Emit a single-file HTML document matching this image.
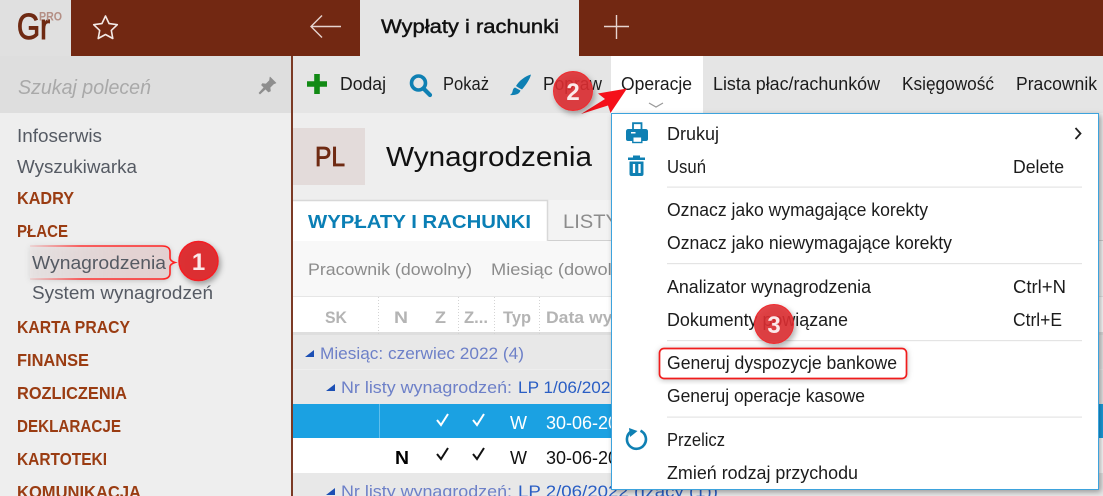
<!DOCTYPE html>
<html lang="pl"><head><meta charset="utf-8"><title>Wypłaty i rachunki</title>
<style>
html,body{margin:0;padding:0;width:1103px;height:496px;overflow:hidden;background:#eee}
svg{display:block;position:absolute;left:0;top:0}
text{font-family:"Liberation Sans",sans-serif;font-size:18px;fill:#202020}
.s{fill:#555a63}
.h{fill:#9a3c12;font-weight:bold;font-size:17.6px}
.m{fill:#1c1c1c}
.g{fill:#8c8c8c}
.c{fill:#b4b4b4;font-weight:bold}
.b1{fill:#6d80c8;font-size:17px}
.b2{fill:#2a5ec4;font-size:17px}
.d{fill:#fff}
.n{fill:#fbeaea;font-size:24px;font-weight:bold}
</style></head><body>
<svg width="1103" height="496" viewBox="0 0 1103 496" xmlns="http://www.w3.org/2000/svg">
<defs>
<linearGradient id="fa" x1="0" x2="1" y1="0" y2="0"><stop offset="0" stop-color="#e9dede" stop-opacity=".4"/><stop offset=".6" stop-color="#e3d3d3"/><stop offset="1" stop-color="#e3d0d0"/></linearGradient>
<linearGradient id="fb" x1="0" x2="1" y1="0" y2="0"><stop offset="0" stop-color="#f44" stop-opacity=".15"/><stop offset=".35" stop-color="#f33"/><stop offset="1" stop-color="#f22"/></linearGradient>
<filter id="sh" x="-30%" y="-30%" width="170%" height="170%"><feDropShadow dx="2" dy="3" stdDeviation="3" flood-color="#000" flood-opacity=".35"/></filter>
<filter id="shm" x="-3%" y="-3%" width="106%" height="106%"><feDropShadow dx="2" dy="2" stdDeviation="3" flood-color="#000" flood-opacity=".35"/></filter>
<filter id="shb" x="-5%" y="-20%" width="110%" height="140%"><feDropShadow dx="0" dy="1" stdDeviation="3" flood-color="#000" flood-opacity=".25"/></filter>
</defs>

<!-- base -->
<rect width="1103" height="496" fill="#eee"/>
<rect x="0" y="0" width="71" height="56" fill="#e0e0e0"/>
<rect x="71" y="0" width="1032" height="56" fill="#722812"/>
<rect x="360" y="0" width="219" height="56" fill="#e5e5e5"/>
<rect x="0" y="56" width="291" height="57" fill="#dedede"/>
<rect x="293" y="56" width="810" height="57" fill="#e5e5e5"/>
<rect x="611" y="56" width="92" height="58" fill="#fff"/>
<rect x="291" y="56" width="2" height="440" fill="#7b3a25"/>

<!-- top bar -->
<text x="17" y="39" textLength="33" lengthAdjust="spacingAndGlyphs" style="font-size:36px;fill:#6f2a13;stroke:#6f2a13;stroke-width:1.1px">Gr</text>
<text x="39" y="20.500" textLength="23" lengthAdjust="spacingAndGlyphs" style="font-size:11.500px;fill:#b48f85;font-weight:bold">PRO</text>
<path d="M105.500 16l3.600 7.600 8.200 1.100-6 5.700 1.500 8.100-7.300-4-7.300 4 1.500-8.100-6-5.700 8.200-1.100z" fill="none" stroke="#f3e9e6" stroke-width="1.600" stroke-linejoin="round"/>
<path d="M341 26.500H311M322 15.500L311 26.500L322 37.500" fill="none" stroke="#e6d4cf" stroke-width="1.400"/>
<text x="381" y="33" textLength="178" lengthAdjust="spacingAndGlyphs" style="font-size:19px;fill:#111;stroke:#111;stroke-width:.45px">Wypłaty i rachunki</text>
<path d="M604 26.500H629M616.500 15V39" fill="none" stroke="#e6d4cf" stroke-width="1.400"/>

<!-- sidebar -->
<text x="18" y="94" textLength="133" lengthAdjust="spacingAndGlyphs" style="font-size:20px;font-style:italic;fill:#a9a9a9">Szukaj poleceń</text>
<path d="M270 77L276 83L273.500 84L270 87.500L270.500 91L268.500 92L265.500 89L260 94L259 93L264 87.500L261.500 85L262.500 83.500L266 84L269.500 80.500Z" fill="#8e8e8e" stroke="#8e8e8e" stroke-width=".6" stroke-linejoin="round"/>
<text class="s" x="17" y="142" textLength="85" lengthAdjust="spacingAndGlyphs">Infoserwis</text>
<text class="s" x="17" y="173" textLength="120" lengthAdjust="spacingAndGlyphs">Wyszukiwarka</text>
<text class="h" x="17" y="204" textLength="57" lengthAdjust="spacingAndGlyphs">KADRY</text>
<text class="h" x="17" y="237" textLength="51" lengthAdjust="spacingAndGlyphs">PŁACE</text>
<path d="M30 246H162Q170 246 170 252V258Q170 261 175 262.500Q170 264 170 267V273Q170 279 162 279H30Z" fill="url(#fa)" filter="url(#shb)"/>
<path d="M30 246H162Q170 246 170 252V258Q170 261 175 262.500Q170 264 170 267V273Q170 279 162 279H30" fill="none" stroke="url(#fb)" stroke-width="1.600"/>
<text class="s" x="32" y="269" textLength="134" lengthAdjust="spacingAndGlyphs">Wynagrodzenia</text>
<text class="s" x="32" y="299" textLength="181" lengthAdjust="spacingAndGlyphs">System wynagrodzeń</text>
<text class="h" x="17" y="333" textLength="113" lengthAdjust="spacingAndGlyphs">KARTA PRACY</text>
<text class="h" x="17" y="366" textLength="72" lengthAdjust="spacingAndGlyphs">FINANSE</text>
<text class="h" x="17" y="399" textLength="110" lengthAdjust="spacingAndGlyphs">ROZLICZENIA</text>
<text class="h" x="17" y="432" textLength="104" lengthAdjust="spacingAndGlyphs">DEKLARACJE</text>
<text class="h" x="17" y="465" textLength="90" lengthAdjust="spacingAndGlyphs">KARTOTEKI</text>
<text class="h" x="17" y="498" textLength="124" lengthAdjust="spacingAndGlyphs">KOMUNIKACJA</text>

<!-- toolbar -->
<path d="M317 74V94M307 84H327" stroke="#118a14" stroke-width="5.600" fill="none"/>
<text x="340" y="90" textLength="46" lengthAdjust="spacingAndGlyphs" class="m">Dodaj</text>
<circle cx="418.500" cy="83" r="7" fill="none" stroke="#0f80b3" stroke-width="3.600"/>
<path d="M423.500 88.500L430 95" stroke="#0f80b3" stroke-width="4.200" stroke-linecap="round"/>
<text x="443" y="90" textLength="46" lengthAdjust="spacingAndGlyphs" class="m">Pokaż</text>
<path d="M531 74.500C525 76 519 81 516 86C519 88 521 89 522 89.500C526 85 530 79 531 74.500ZM515 87.500C512.500 88.500 513 91 512 93C511.500 94 510.500 94.500 510 95C514 95.500 519.500 94.500 520.500 90.500Z" fill="#0f80b3"/>
<text x="543" y="90" textLength="59" lengthAdjust="spacingAndGlyphs" class="m">Popraw</text>
<text x="621" y="90" textLength="71" lengthAdjust="spacingAndGlyphs" class="m">Operacje</text>
<path d="M649 103L656 107L663 103" fill="none" stroke="#999" stroke-width="1.200"/>
<text x="713" y="90" textLength="167" lengthAdjust="spacingAndGlyphs" class="m">Lista płac/rachunków</text>
<text x="902" y="90" textLength="92" lengthAdjust="spacingAndGlyphs" class="m">Księgowość</text>
<text x="1016" y="90" textLength="81" lengthAdjust="spacingAndGlyphs" class="m">Pracownik</text>

<!-- title -->
<rect x="293" y="128" width="72" height="57" fill="#e3dbda"/>
<text x="315" y="166" textLength="30" lengthAdjust="spacingAndGlyphs" style="font-size:28px;fill:#6f2a13;stroke:#6f2a13;stroke-width:.8px">PL</text>
<text x="386" y="166" textLength="206" lengthAdjust="spacingAndGlyphs" style="font-size:28px;fill:#111">Wynagrodzenia</text>

<!-- tabs -->
<rect x="293" y="200" width="810" height="41" fill="#f3f3f3"/>
<rect x="293" y="240" width="810" height="1" fill="#d0d0d0"/>
<rect x="293" y="200" width="254" height="41" fill="#fff"/>
<path d="M293 200.500H547.500V241" fill="none" stroke="#d8d8d8" stroke-width="1.500"/>
<text x="308" y="228" textLength="223" lengthAdjust="spacingAndGlyphs" style="font-size:18px;font-weight:bold;fill:#0a7fb5">WYPŁATY I RACHUNKI</text>
<text x="563" y="228" textLength="56" lengthAdjust="spacingAndGlyphs" class="g" style="font-size:19px">LISTY</text>

<!-- filter -->
<rect x="293" y="241" width="810" height="55" fill="#f8f8f8"/>
<rect x="293" y="296" width="810" height="1" fill="#e6e6e6"/>
<text x="308" y="275" textLength="164" lengthAdjust="spacingAndGlyphs" class="g" style="font-size:16.500px">Pracownik (dowolny)</text>
<text x="491" y="275" textLength="146" lengthAdjust="spacingAndGlyphs" class="g" style="font-size:16.500px">Miesiąc (dowolny)</text>

<!-- grid header -->
<rect x="293" y="297" width="810" height="36" fill="#fff"/>
<rect x="293" y="332" width="810" height="3" fill="#dedede"/>
<text class="c" x="325" y="323" textLength="22" lengthAdjust="spacingAndGlyphs" style="font-size:17px">SK</text>
<text class="c" x="394" y="323" textLength="14" lengthAdjust="spacingAndGlyphs" style="font-size:17px">N</text>
<text class="c" x="435" y="323" textLength="11" lengthAdjust="spacingAndGlyphs" style="font-size:17px">Z</text>
<text class="c" x="464" y="323" textLength="24" lengthAdjust="spacingAndGlyphs" style="font-size:17px">Z...</text>
<text class="c" x="503" y="323" textLength="28" lengthAdjust="spacingAndGlyphs" style="font-size:17px">Typ</text>
<text class="c" x="546" y="323" textLength="82" lengthAdjust="spacingAndGlyphs" style="font-size:17px">Data wypł</text>
<path d="M378.500 297V335M458.500 297V335M494.500 297V335M539.500 297V335" stroke="#d4d4d4" stroke-dasharray="1 2"/>

<!-- grid rows -->
<rect x="293" y="335" width="810" height="69" fill="#e8e8e8"/>
<rect x="293" y="369" width="810" height="1" fill="#eee"/>
<path d="M314 350V357H305Z" fill="#1c4fb4"/>
<text class="b1" x="320" y="359" textLength="204" lengthAdjust="spacingAndGlyphs">Miesiąc: czerwiec 2022 (4)</text>
<path d="M335 384V391H326Z" fill="#1c4fb4"/>
<text class="b1" x="341" y="393" textLength="171" lengthAdjust="spacingAndGlyphs">Nr listy wynagrodzeń:</text>
<text class="b2" x="518" y="393" textLength="102" lengthAdjust="spacingAndGlyphs">LP 1/06/2022</text>

<rect x="293" y="404" width="810" height="34" fill="#1ba1e2"/>
<rect x="379" y="404" width="1" height="34" fill="#5fbeec"/>
<path d="M437 420L441 425L448 414M473 420L477 425L484 414" fill="none" stroke="#fff" stroke-width="2"/>
<text class="d" x="510" y="429" textLength="17" lengthAdjust="spacingAndGlyphs">W</text>
<text class="d" x="546" y="429" textLength="92" lengthAdjust="spacingAndGlyphs">30-06-2022</text>

<rect x="293" y="438" width="810" height="35" fill="#fff"/>
<text x="395" y="464" textLength="14" lengthAdjust="spacingAndGlyphs" style="font-weight:bold;fill:#000">N</text>
<path d="M437 454L441 459L448 448M473 454L477 459L484 448" fill="none" stroke="#111" stroke-width="2"/>
<text x="510" y="464" textLength="17" lengthAdjust="spacingAndGlyphs" style="fill:#111">W</text>
<text x="546" y="464" textLength="92" lengthAdjust="spacingAndGlyphs" style="fill:#111">30-06-2022</text>

<rect x="293" y="473" width="810" height="23" fill="#e8e8e8"/>
<path d="M335 488V495H326Z" fill="#1c4fb4"/>
<text class="b1" x="341" y="497" textLength="171" lengthAdjust="spacingAndGlyphs">Nr listy wynagrodzeń:</text>
<text class="b2" x="518" y="497" textLength="200" lengthAdjust="spacingAndGlyphs">LP 2/06/2022 (Izacy (1))</text>

<!-- menu -->
<rect x="611.500" y="113.500" width="487" height="376" fill="#fff" stroke="#3ea3dd" filter="url(#shm)"/>
<path d="M633 123.200H641.500V130H633Z" fill="#fff" stroke="#0f80b3" stroke-width="1.800"/>
<path d="M628.500 129H645.500Q648 129 648 131.500V139Q648 141 646 141H628Q626 141 626 139V131.500Q626 129 628.500 129Z" fill="#0f80b3"/>
<rect x="632.800" y="136.800" width="9" height="5.700" fill="#fff" stroke="#0f80b3" stroke-width="1.400"/>
<rect x="631" y="132" width="4.500" height="1.500" fill="#fff"/>
<text class="m" x="667" y="140" textLength="52" lengthAdjust="spacingAndGlyphs">Drukuj</text>
<path d="M1075.500 128L1080.500 133.500L1075.500 139" fill="none" stroke="#222" stroke-width="1.800"/>
<path d="M628 157.500H645V160H628ZM633 157.500V155.500H640V157.500ZM629.500 161.500H643.500V174Q643.500 176 641.500 176H631.500Q629.500 176 629.500 174Z" fill="#0f80b3"/>
<path d="M634 164V173M639.500 164V173" stroke="#fff" stroke-width="2.300"/>
<text class="m" x="667" y="173" textLength="39" lengthAdjust="spacingAndGlyphs">Usuń</text>
<text class="m" x="1013" y="173" textLength="51" lengthAdjust="spacingAndGlyphs">Delete</text>
<rect x="667" y="186.500" width="415" height="1.200" fill="#e4e4e4"/>
<text class="m" x="667" y="216" textLength="261" lengthAdjust="spacingAndGlyphs">Oznacz jako wymagające korekty</text>
<text class="m" x="667" y="249" textLength="285" lengthAdjust="spacingAndGlyphs">Oznacz jako niewymagające korekty</text>
<rect x="667" y="263" width="415" height="1.200" fill="#e4e4e4"/>
<text class="m" x="667" y="293" textLength="204" lengthAdjust="spacingAndGlyphs">Analizator wynagrodzenia</text>
<text class="m" x="1013" y="293" textLength="53" lengthAdjust="spacingAndGlyphs">Ctrl+N</text>
<text class="m" x="667" y="326" textLength="181" lengthAdjust="spacingAndGlyphs">Dokumenty powiązane</text>
<text class="m" x="1013" y="326" textLength="49" lengthAdjust="spacingAndGlyphs">Ctrl+E</text>
<rect x="667" y="340" width="415" height="1.200" fill="#e4e4e4"/>
<rect x="659.500" y="348.500" width="247" height="30" rx="4.500" fill="#fff" stroke="#f01c1c" stroke-width="1.700" filter="url(#shb)"/>
<text class="m" x="667" y="369" textLength="230" lengthAdjust="spacingAndGlyphs">Generuj dyspozycje bankowe</text>
<text class="m" x="667" y="402" textLength="198" lengthAdjust="spacingAndGlyphs">Generuj operacje kasowe</text>
<rect x="667" y="416.500" width="415" height="1.200" fill="#e4e4e4"/>
<path d="M640.500 430.700A9.500 9.500 0 1 1 631 431.500" fill="none" stroke="#0f80b3" stroke-width="2.600"/>
<path d="M629 428L637.500 431L630 437Z" fill="#0f80b3"/>
<text class="m" x="667" y="446" textLength="58" lengthAdjust="spacingAndGlyphs">Przelicz</text>
<text class="m" x="667" y="479" textLength="191" lengthAdjust="spacingAndGlyphs">Zmień rodzaj przychodu</text>

<!-- annotations -->
<path d="M627 88.500L598 93.500L605 99L581 114L608 105.500L610.500 113Z" fill="#f5101a"/>
<circle cx="198.500" cy="261" r="19.500" fill="#dd2c30" fill-opacity=".97" stroke="#f51c22" stroke-width="1.500" filter="url(#sh)"/>
<text class="n" x="198.500" y="270" text-anchor="middle">1</text>
<circle cx="573" cy="91" r="19.500" fill="#dd2c30" fill-opacity=".88" stroke="#f02a2e" stroke-width="1" filter="url(#sh)"/>
<text class="n" x="573" y="100" text-anchor="middle">2</text>
<circle cx="774" cy="324" r="19.500" fill="#dd2c30" fill-opacity=".88" stroke="#f02a2e" stroke-width="1" filter="url(#sh)"/>
<text class="n" x="774" y="333" text-anchor="middle">3</text>
</svg>
</body></html>
